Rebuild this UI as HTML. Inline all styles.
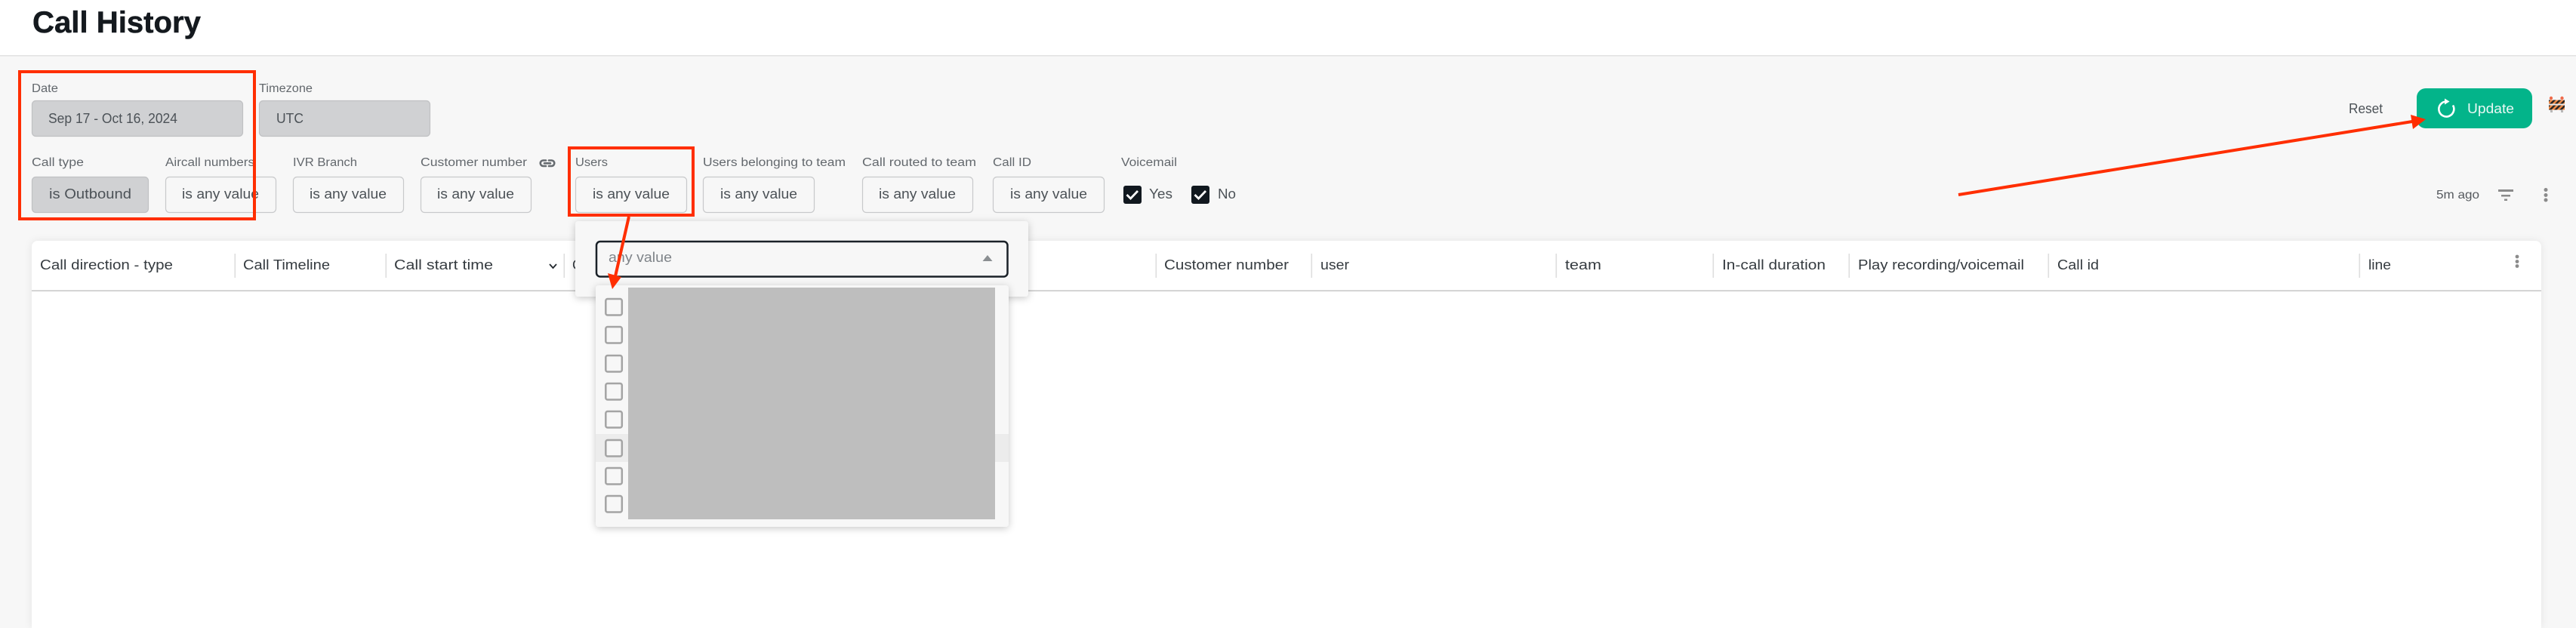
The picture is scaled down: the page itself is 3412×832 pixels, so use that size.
<!DOCTYPE html>
<html lang="en">
<head>
<meta charset="utf-8">
<title>Call History</title>
<style>
html,body{margin:0;padding:0;width:3412px;height:832px;overflow:hidden;background:#f7f7f7}
svg{display:block;font-family:"Liberation Sans",sans-serif}
.lbl{font-size:15.5px;fill:#63686d}
.val{font-size:18px;fill:#4c5257}
.hd{font-size:18px;fill:#353b40}
.box{fill:#f7f7f7;stroke:#c8c9cb;stroke-width:1.2}
.gbox{fill:#d0d1d3;stroke:#c0c1c3;stroke-width:1.2}
.div{fill:#dedede}
.cb{fill:#f7f7f7;stroke:#a4a4a4;stroke-width:2.5}
</style>
</head>
<body>
<svg width="3412" height="832" viewBox="0 0 3412 832" xmlns="http://www.w3.org/2000/svg">
<defs>
<filter id="s1" x="-2%" y="-5%" width="104%" height="110%"><feDropShadow dx="0" dy="0" stdDeviation="5" flood-color="#000" flood-opacity=".08"/></filter>
<filter id="s2" x="-10%" y="-20%" width="120%" height="145%"><feDropShadow dx="0" dy="2" stdDeviation="5" flood-color="#000" flood-opacity=".22"/></filter>
<pattern id="stripe" width="5" height="5" patternUnits="userSpaceOnUse" patternTransform="rotate(45)"><rect width="5" height="5" fill="#f08a45"/><rect width="2.500" height="5" fill="#2a2622"/></pattern>
</defs>

<rect width="3412" height="832" fill="#f7f7f7"/>
<rect width="3412" height="73" fill="#fff"/>
<rect y="73" width="3412" height="1.500" fill="#e2e2e2"/>
<text x="43" y="43" font-size="40" font-weight="700" fill="#14191e" stroke="#14191e" stroke-width=".5" textLength="223" lengthAdjust="spacingAndGlyphs">Call History</text>

<!-- Filters row 1 -->
<text class="lbl" x="42" y="122" textLength="35" lengthAdjust="spacingAndGlyphs">Date</text>
<rect class="gbox" x="42.500" y="133.500" width="279" height="47" rx="5"/>
<text class="val" x="64" y="163" textLength="171" lengthAdjust="spacingAndGlyphs">Sep 17 - Oct 16, 2024</text>
<text class="lbl" x="343" y="122" textLength="71" lengthAdjust="spacingAndGlyphs">Timezone</text>
<rect class="gbox" x="343.500" y="133.500" width="226" height="47" rx="5"/>
<text class="val" x="366" y="163" textLength="36" lengthAdjust="spacingAndGlyphs">UTC</text>

<!-- Filters row 2 -->
<text class="lbl" x="42" y="220" textLength="69" lengthAdjust="spacingAndGlyphs">Call type</text>
<rect class="gbox" x="42.500" y="234.500" width="154" height="47" rx="5"/>
<text class="val" x="65" y="263" textLength="109" lengthAdjust="spacingAndGlyphs">is Outbound</text>

<text class="lbl" x="219" y="220" textLength="118" lengthAdjust="spacingAndGlyphs">Aircall numbers</text>
<rect class="box" x="219.500" y="234.500" width="146" height="47" rx="5"/>
<text class="val" x="241" y="263" textLength="102" lengthAdjust="spacingAndGlyphs">is any value</text>

<text class="lbl" x="388" y="220" textLength="85" lengthAdjust="spacingAndGlyphs">IVR Branch</text>
<rect class="box" x="388.500" y="234.500" width="146" height="47" rx="5"/>
<text class="val" x="410" y="263" textLength="102" lengthAdjust="spacingAndGlyphs">is any value</text>

<text class="lbl" x="557" y="220" textLength="141" lengthAdjust="spacingAndGlyphs">Customer number</text>
<rect class="box" x="557.500" y="234.500" width="146" height="47" rx="5"/>
<text class="val" x="579" y="263" textLength="102" lengthAdjust="spacingAndGlyphs">is any value</text>
<g fill="none" stroke="#666b70" stroke-width="2.600" stroke-linecap="round">
<path d="M723 212.500h-3.500a3.700 3.700 0 0 0 0 7.500h3.500"/>
<path d="M727 212.500h3.500a3.700 3.700 0 0 1 0 7.500h-3.500"/>
<path d="M721 216.300h8"/>
</g>

<text class="lbl" x="762" y="220" textLength="43" lengthAdjust="spacingAndGlyphs">Users</text>
<rect class="box" x="762.500" y="234.500" width="147" height="47" rx="5"/>
<text class="val" x="785" y="263" textLength="102" lengthAdjust="spacingAndGlyphs">is any value</text>

<text class="lbl" x="931" y="220" textLength="189" lengthAdjust="spacingAndGlyphs">Users belonging to team</text>
<rect class="box" x="931.500" y="234.500" width="147" height="47" rx="5"/>
<text class="val" x="954" y="263" textLength="102" lengthAdjust="spacingAndGlyphs">is any value</text>

<text class="lbl" x="1142" y="220" textLength="151" lengthAdjust="spacingAndGlyphs">Call routed to team</text>
<rect class="box" x="1142.500" y="234.500" width="146" height="47" rx="5"/>
<text class="val" x="1164" y="263" textLength="102" lengthAdjust="spacingAndGlyphs">is any value</text>

<text class="lbl" x="1315" y="220" textLength="51" lengthAdjust="spacingAndGlyphs">Call ID</text>
<rect class="box" x="1315.500" y="234.500" width="147" height="47" rx="5"/>
<text class="val" x="1338" y="263" textLength="102" lengthAdjust="spacingAndGlyphs">is any value</text>

<text class="lbl" x="1485" y="220" textLength="74" lengthAdjust="spacingAndGlyphs">Voicemail</text>
<rect x="1488" y="246" width="24" height="24" rx="3" fill="#11181f"/>
<path d="M1492.500 258l5 5 9.500-10" fill="none" stroke="#fff" stroke-width="2.800"/>
<text class="val" x="1522" y="263" textLength="31" lengthAdjust="spacingAndGlyphs">Yes</text>
<rect x="1578" y="246" width="24" height="24" rx="3" fill="#11181f"/>
<path d="M1582.500 258l5 5 9.500-10" fill="none" stroke="#fff" stroke-width="2.800"/>
<text class="val" x="1613" y="263" textLength="24" lengthAdjust="spacingAndGlyphs">No</text>

<!-- Right controls -->
<text class="val" x="3111" y="150" textLength="45" lengthAdjust="spacingAndGlyphs">Reset</text>
<rect x="3201" y="117" width="153" height="53" rx="12" fill="#03b48a"/>
<path d="M3249 139.500a10 10 0 1 1 -9 -5" fill="none" stroke="#fff" stroke-width="2.600"/>
<path d="M3238 130.500l6.500 4-6.500 4z" fill="#fff"/>
<text x="3268" y="150" font-size="18" fill="#e9f8f4" textLength="62" lengthAdjust="spacingAndGlyphs">Update</text>

<!-- Barrier -->
<rect x="3378" y="146" width="3" height="3" fill="#b8b8b8"/>
<rect x="3392" y="146" width="3" height="3" fill="#b8b8b8"/>
<circle cx="3379" cy="130" r="2.200" fill="#ee6a4a"/>
<circle cx="3393.500" cy="130" r="2.200" fill="#ee6a4a"/>
<rect x="3376" y="132.500" width="21" height="5" fill="url(#stripe)"/>
<rect x="3376" y="137.500" width="21" height="2" fill="#e8e8e8"/>
<rect x="3376" y="139.500" width="21" height="6" fill="url(#stripe)"/>

<text x="3227" y="263" font-size="16" fill="#55595e" textLength="57" lengthAdjust="spacingAndGlyphs">5m ago</text>
<g fill="#8b8b8b">
<rect x="3309" y="251" width="20" height="3"/>
<rect x="3313" y="258" width="12" height="2.500"/>
<rect x="3317" y="263.500" width="4" height="2.500"/>
<circle cx="3372" cy="251.500" r="2.500"/><circle cx="3372" cy="258.500" r="2.500"/><circle cx="3372" cy="265" r="2.500"/>
</g>

<!-- Table -->
<path d="M42 832V327a8 8 0 0 1 8-8H3358a8 8 0 0 1 8 8V832z" fill="#fff" filter="url(#s1)"/>
<rect x="42" y="384.500" width="3324" height="1.500" fill="#c6c6c6"/>
<g class="div">
<rect x="310.500" y="336" width="1.600" height="32"/><rect x="510.500" y="336" width="1.600" height="32"/>
<rect x="746.500" y="336" width="1.600" height="32"/><rect x="1530.500" y="336" width="1.600" height="32"/>
<rect x="1736.500" y="336" width="1.600" height="32"/><rect x="2060.500" y="336" width="1.600" height="32"/>
<rect x="2268.500" y="336" width="1.600" height="32"/><rect x="2448.500" y="336" width="1.600" height="32"/>
<rect x="2712.500" y="336" width="1.600" height="32"/><rect x="3124.500" y="336" width="1.600" height="32"/>
</g>
<text class="hd" x="53" y="357" textLength="176" lengthAdjust="spacingAndGlyphs">Call direction - type</text>
<text class="hd" x="322" y="357" textLength="115" lengthAdjust="spacingAndGlyphs">Call Timeline</text>
<text class="hd" x="522" y="357" textLength="131" lengthAdjust="spacingAndGlyphs">Call start time</text>
<path d="M728 350l4.500 5 4.500-5" fill="none" stroke="#23292e" stroke-width="1.800"/>
<text class="hd" x="758" y="357">C</text>
<text class="hd" x="1542" y="357" textLength="165" lengthAdjust="spacingAndGlyphs">Customer number</text>
<text class="hd" x="1749" y="357" textLength="38" lengthAdjust="spacingAndGlyphs">user</text>
<text class="hd" x="2073" y="357" textLength="48" lengthAdjust="spacingAndGlyphs">team</text>
<text class="hd" x="2281" y="357" textLength="137" lengthAdjust="spacingAndGlyphs">In-call duration</text>
<text class="hd" x="2461" y="357" textLength="220" lengthAdjust="spacingAndGlyphs">Play recording/voicemail</text>
<text class="hd" x="2725" y="357" textLength="55" lengthAdjust="spacingAndGlyphs">Call id</text>
<text class="hd" x="3137" y="357" textLength="30" lengthAdjust="spacingAndGlyphs">line</text>
<g fill="#8b8b8b"><circle cx="3334" cy="340" r="2.400"/><circle cx="3334" cy="346.500" r="2.400"/><circle cx="3334" cy="352.500" r="2.400"/></g>

<!-- Users popup -->
<rect x="762" y="293" width="600" height="100" rx="4" fill="#f7f7f7" filter="url(#s2)"/>
<rect x="790" y="320" width="544.500" height="46.500" rx="5" fill="#f7f7f7" stroke="#1a2128" stroke-width="2.500"/>
<text x="806" y="347" font-size="18" fill="#7f8489" textLength="84" lengthAdjust="spacingAndGlyphs">any value</text>
<path d="M1301.500 346l6.500-8 6.500 8z" fill="#8a8e91"/>

<!-- List -->
<rect x="789" y="378" width="547" height="320" rx="4" fill="#f7f7f7" filter="url(#s2)"/>
<rect x="789" y="575" width="547" height="37" fill="#ececec"/>
<rect class="cb" x="802.300" y="396" width="21.500" height="21.500" rx="2.500"/>
<rect class="cb" x="802.300" y="433" width="21.500" height="21.500" rx="2.500"/>
<rect class="cb" x="802.300" y="471" width="21.500" height="21.500" rx="2.500"/>
<rect class="cb" x="802.300" y="508" width="21.500" height="21.500" rx="2.500"/>
<rect class="cb" x="802.300" y="545" width="21.500" height="21.500" rx="2.500"/>
<rect class="cb" x="802.300" y="583" width="21.500" height="21.500" rx="2.500"/>
<rect class="cb" x="802.300" y="620" width="21.500" height="21.500" rx="2.500"/>
<rect class="cb" x="802.300" y="657" width="21.500" height="21.500" rx="2.500"/>
<rect x="832" y="381" width="486" height="307" fill="#bebebe"/>

<!-- Annotations -->
<g fill="none" stroke="#ff2e00" stroke-width="4">
<rect x="26" y="95" width="311" height="195"/>
<rect x="754" y="196" width="164" height="89"/>
<path d="M2594 258L3195 161"/>
<path d="M833 287L815 366"/>
</g>
<path d="M3213 158L3193 152L3196 171z" fill="#ff2e00"/>
<path d="M811 383L805 362L823 367z" fill="#ff2e00"/>
</svg>
</body>
</html>
